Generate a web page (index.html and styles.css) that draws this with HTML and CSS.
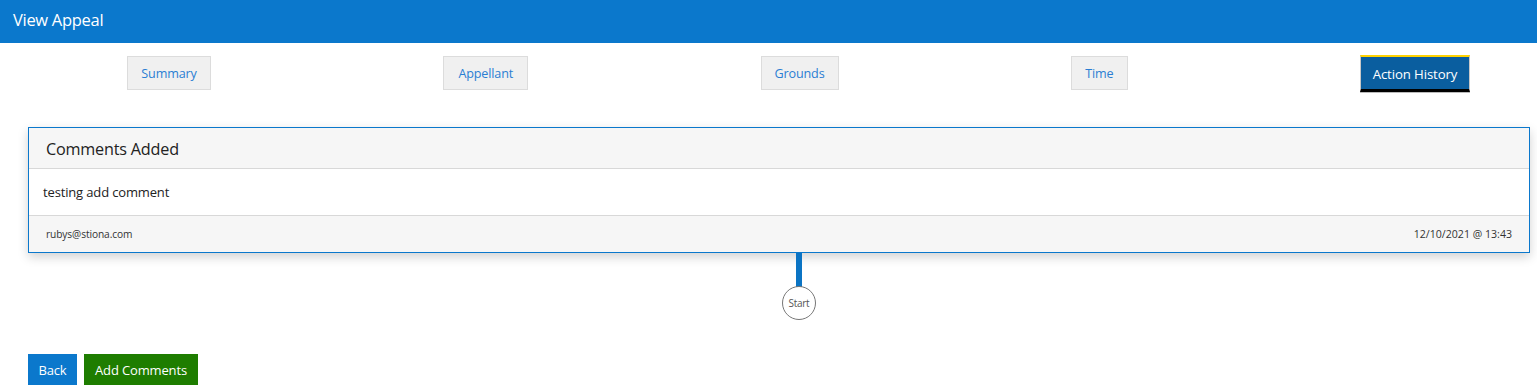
FILE: index.html
```html
<!DOCTYPE html>
<html>
<head>
<meta charset="utf-8">
<link rel="stylesheet" href="styles.css">
</head>
<body>
<header class="topbar">View Appeal</header>
<nav class="tabs">
  <a class="tab">Summary</a>
  <a class="tab">Appellant</a>
  <a class="tab">Grounds</a>
  <a class="tab">Time</a>
  <a class="tab active">Action History</a>
</nav>
<section class="history">
  <div class="card">
    <div class="card-head">Comments Added</div>
    <div class="card-body">testing add comment</div>
    <div class="card-foot"><span>rubys@stiona.com</span><span>12/10/2021 @ 13:43</span></div>
  </div>
  <div class="connector"></div>
  <div class="start">Start</div>
</section>
<div class="actions">
  <button class="btn btn-blue">Back</button>
  <button class="btn btn-green">Add Comments</button>
</div>
</body>
</html>
```
FILE: styles.css
```css
* { box-sizing: border-box; }
body {
  margin: 0;
  font-family: "Open Sans", "Noto Sans", sans-serif;
  color: #222;
  background: #fff;
}
.topbar {
  height: 43px;
  background: #0b78cc;
  color: #fff;
  font-size: 16.5px;
  line-height: 40px;
  padding-left: 13px;
  letter-spacing: -0.3px;
}
.tabs {
  display: flex;
  justify-content: space-between;
  align-items: flex-start;
  padding: 13px 67px 0 127px;
  height: 84px;
}
.tab {
  display: flex;
  align-items: center;
  justify-content: center;
  height: 34px;
  padding: 1px 0 0;
  background: #f0f0f0;
  border: 1px solid #dcdcdc;
  color: #2a7ed3;
  font-size: 12.6px;
  letter-spacing: -0.15px;
  white-space: nowrap;
}
.tab:nth-child(1) { width: 84px; }
.tab:nth-child(2) { width: 85px; }
.tab:nth-child(3) { width: 78px; }
.tab:nth-child(4) { width: 57px; }
.tab.active {
  width: 110px;
  height: 37px;
  margin-top: -1px;
  background: #0a5e9f;
  color: #fff;
  border: 0;
  border-left: 1px solid #c8c8c8;
  border-right: 1px solid #c8c8c8;
  border-top: 2px solid #ffd200;
  border-bottom: 3px solid #000;
  box-shadow: 0 1px 0 #bbb;
  padding-top: 1px;
  font-size: 13.2px;
  letter-spacing: -0.1px;
}
.history {
  display: flex;
  flex-direction: column;
  align-items: center;
  padding: 0 7px 0 28px;
}
.card {
  width: 100%;
  border: 1px solid #0b78cc;
  box-shadow: 0 4px 10px rgba(0,0,0,0.18);
}
.card-head {
  height: 41px;
  background: #f6f6f6;
  border-bottom: 1px solid #d8d8d8;
  padding-left: 17px;
  font-size: 16.2px;
  line-height: 42px;
  color: #222;
  letter-spacing: -0.2px;
}
.card-body {
  height: 47px;
  background: #fff;
  border-bottom: 1px solid #d8d8d8;
  padding-left: 14px;
  font-size: 13px;
  line-height: 47px;
  letter-spacing: -0.15px;
}
.card-foot {
  height: 36px;
  background: #f6f6f6;
  display: flex;
  justify-content: space-between;
  align-items: center;
  padding: 0 17px 0 17px;
  font-size: 10.2px;
  color: #333;
  letter-spacing: -0.1px;
}
.card-foot span:last-child {
  font-size: 10.6px;
  letter-spacing: 0;
}
.connector {
  width: 6px;
  height: 34px;
  margin-left: 40px;
  background: #0b74c4;
}
.start {
  width: 34px;
  height: 34px;
  margin-top: -1px;
  margin-left: 40px;
  border: 1px solid #777;
  border-radius: 50%;
  display: flex;
  align-items: center;
  justify-content: center;
  font-size: 10px;
  color: #555;
  letter-spacing: -0.3px;
}
.actions {
  display: flex;
  gap: 7px;
  padding: 34px 0 0 28px;
}
.btn {
  height: 31px;
  border: 0;
  color: #fff;
  font-family: inherit;
  font-size: 13px;
  padding: 0;
  letter-spacing: -0.15px;
}
.btn-blue { background: #0b78cc; width: 49px; }
.btn-green { background: #1e7d00; width: 114px; }
```
